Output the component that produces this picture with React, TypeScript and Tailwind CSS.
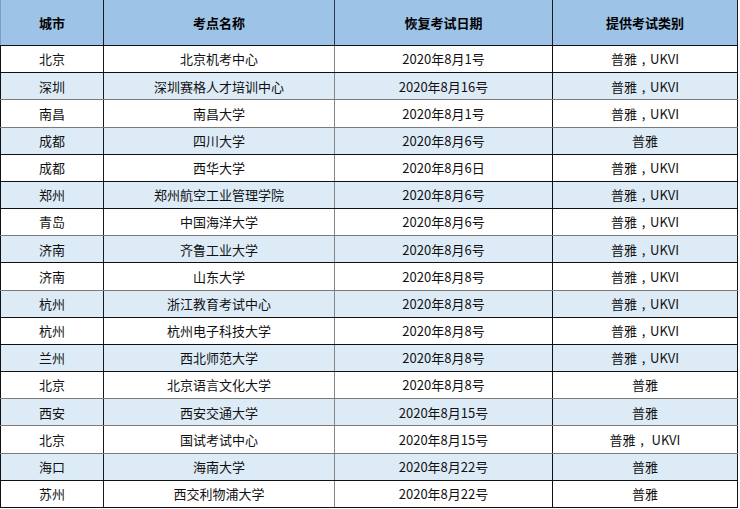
import React from "react";

const rows: [string, string, string, string][] = [
  ["北京", "北京机考中心", "2020年8月1号", "普雅，UKVI"],
  ["深圳", "深圳赛格人才培训中心", "2020年8月16号", "普雅，UKVI"],
  ["南昌", "南昌大学", "2020年8月1号", "普雅，UKVI"],
  ["成都", "四川大学", "2020年8月6号", "普雅"],
  ["成都", "西华大学", "2020年8月6日", "普雅，UKVI"],
  ["郑州", "郑州航空工业管理学院", "2020年8月6号", "普雅，UKVI"],
  ["青岛", "中国海洋大学", "2020年8月6号", "普雅，UKVI"],
  ["济南", "齐鲁工业大学", "2020年8月6号", "普雅，UKVI"],
  ["济南", "山东大学", "2020年8月8号", "普雅，UKVI"],
  ["杭州", "浙江教育考试中心", "2020年8月8号", "普雅，UKVI"],
  ["杭州", "杭州电子科技大学", "2020年8月8号", "普雅，UKVI"],
  ["兰州", "西北师范大学", "2020年8月8号", "普雅，UKVI"],
  ["北京", "北京语言文化大学", "2020年8月8号", "普雅"],
  ["西安", "西安交通大学", "2020年8月15号", "普雅"],
  ["北京", "国试考试中心", "2020年8月15号", "普雅， UKVI"],
  ["海口", "海南大学", "2020年8月22号", "普雅"],
  ["苏州", "西交利物浦大学", "2020年8月22号", "普雅"],
];

const grayBottom = new Set([1, 2, 6, 8, 12, 13, 14]);

function Kind({ text }: { text: string }) {
  const idx = text.indexOf("，");
  if (idx < 0) return <>{text}</>;
  return (
    <span className="whitespace-pre">
      {text.slice(0, idx)}
      <span className="inline-block w-[13px] text-center">,</span>
      {text.slice(idx + 1)}
    </span>
  );
}

export default function App() {
  return (
    <div
      className="w-[740px] h-[509px] bg-white text-[#111]"
      style={{ fontFamily: '"Noto Sans CJK SC", "Noto Sans", sans-serif' }}
    >
      <div className="w-[738px] h-[508px] flex flex-col">
        <div className="grid grid-cols-[104px_231px_218px_185px] h-[46px] bg-[#9dc3e6] border-b border-[#111] text-[13px] font-bold text-black">
          <div className="flex items-center justify-center border-l border-r border-l-[#7f9fc0] border-r-[#1a1a1a]">城市</div>
          <div className="flex items-center justify-center border-r border-[#2b3b4f]">考点名称</div>
          <div className="flex items-center justify-center border-r border-[#1a1a1a]">恢复考试日期</div>
          <div className="flex items-center justify-center border-r border-[#1a1a1a]">提供考试类别</div>
        </div>
        {rows.map((r, i) => (
          <div
            key={i}
            className={
              "flex-1 grid grid-cols-[104px_231px_218px_185px] border-b text-[13px] " +
              (i % 2 === 1 ? "bg-[#ddebf7] " : "bg-white ") +
              (grayBottom.has(i) ? "border-[#7a7a7a]" : "border-[#111]")
            }
          >
            <div className="flex items-center justify-center border-l border-r border-l-[#111] border-r-[#1a1a1a]">{r[0]}</div>
            <div className="flex items-center justify-center border-r border-r-[#858585]">{r[1]}</div>
            <div className="flex items-center justify-center border-r border-r-[#111]">{r[2]}</div>
            <div className="flex items-center justify-center border-r border-r-[#111]">
              <Kind text={r[3]} />
            </div>
          </div>
        ))}
      </div>
    </div>
  );
}
